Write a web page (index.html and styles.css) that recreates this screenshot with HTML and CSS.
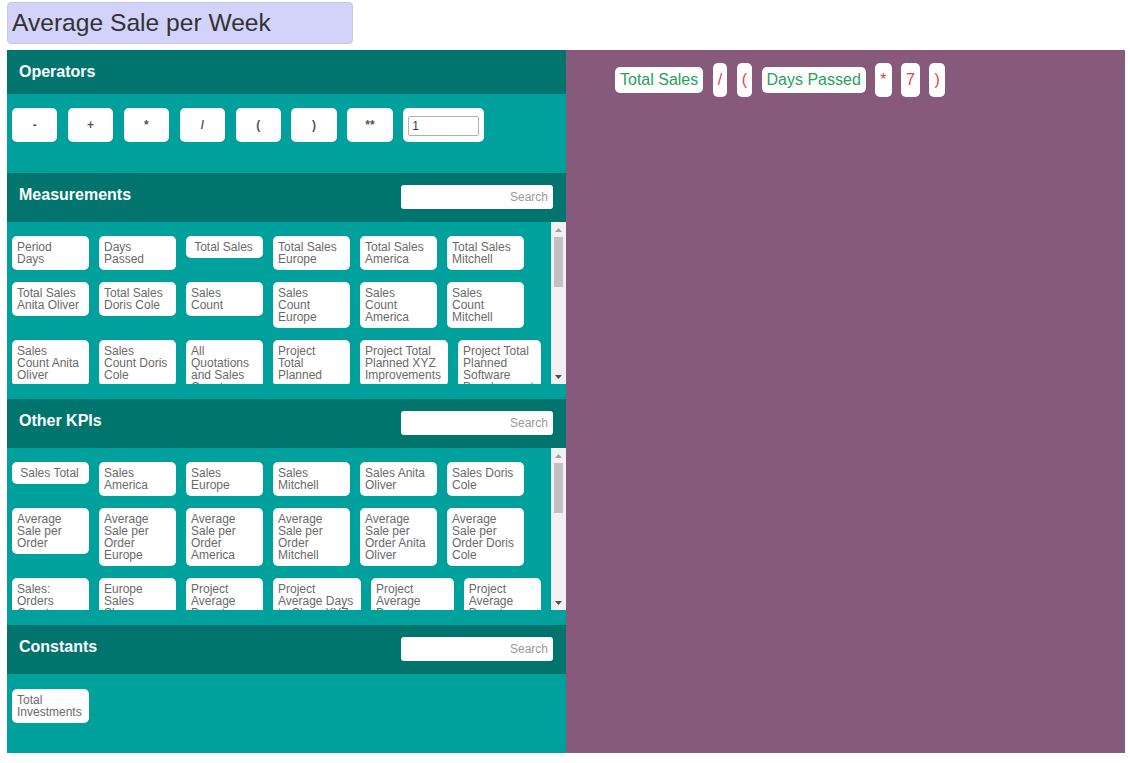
FILE: index.html
```html
<!DOCTYPE html>
<html>
<head>
<meta charset="utf-8">
<title>Average Sale per Week</title>
<link rel="stylesheet" href="styles.css">
</head>
<body>
<input class="title" type="text" value="Average Sale per Week">
<div class="editor">
  <div class="left">
    <section class="sec">
      <div class="hdr"><h3>Operators</h3></div>
      <div class="ops">
        <button class="op">-</button>
        <button class="op">+</button>
        <button class="op">*</button>
        <button class="op">/</button>
        <button class="op">(</button>
        <button class="op">)</button>
        <button class="op">**</button>
        <div class="op-num"><input type="text" value="1"></div>
      </div>
    </section>
    <section class="sec">
      <div class="hdr"><h3>Measurements</h3><input class="search" type="text" placeholder="Search"></div>
      <div class="scrollwrap">
        <div class="chips">
          <div class="chip"><span>Period Days</span></div>
          <div class="chip"><span>Days Passed</span></div>
          <div class="chip"><span>Total Sales</span></div>
          <div class="chip"><span>Total Sales Europe</span></div>
          <div class="chip"><span>Total Sales America</span></div>
          <div class="chip"><span>Total Sales Mitchell</span></div>
          <div class="chip"><span>Total Sales Anita Oliver</span></div>
          <div class="chip"><span>Total Sales Doris Cole</span></div>
          <div class="chip"><span>Sales Count</span></div>
          <div class="chip"><span>Sales Count Europe</span></div>
          <div class="chip"><span>Sales Count America</span></div>
          <div class="chip"><span>Sales Count Mitchell</span></div>
          <div class="chip"><span>Sales Count Anita Oliver</span></div>
          <div class="chip"><span>Sales Count Doris Cole</span></div>
          <div class="chip"><span>All Quotations and Sales Count</span></div>
          <div class="chip"><span>Project Total Planned</span></div>
          <div class="chip"><span>Project Total Planned XYZ Improvements</span></div>
          <div class="chip"><span>Project Total Planned Software Development</span></div>
          <div class="chip"><span>Project Total Invoiced</span></div>
          <div class="chip"><span>Project Total Invoiced XYZ</span></div>
          <div class="chip"><span>Project Total Invoiced Software</span></div>
          <div class="chip"><span>Project Margin</span></div>
          <div class="chip"><span>Project Margin XYZ</span></div>
          <div class="chip"><span>Project Margin Software</span></div>
        </div>
        <div class="vbar">
          <div class="vbtn"><svg width="15" height="15" viewBox="0 0 15 15"><polygon points="4,10 11,10 7.5,6" fill="#a3a3a3"/></svg></div>
          <div class="vtrack"><div class="vthumb"></div></div>
          <div class="vbtn"><svg width="15" height="15" viewBox="0 0 15 15"><polygon points="4,6 11,6 7.5,10" fill="#505050"/></svg></div>
        </div>
      </div>
    </section>
    <section class="sec">
      <div class="hdr"><h3>Other KPIs</h3><input class="search" type="text" placeholder="Search"></div>
      <div class="scrollwrap">
        <div class="chips">
          <div class="chip"><span>Sales Total</span></div>
          <div class="chip"><span>Sales America</span></div>
          <div class="chip"><span>Sales Europe</span></div>
          <div class="chip"><span>Sales Mitchell</span></div>
          <div class="chip"><span>Sales Anita Oliver</span></div>
          <div class="chip"><span>Sales Doris Cole</span></div>
          <div class="chip"><span>Average Sale per Order</span></div>
          <div class="chip"><span>Average Sale per Order Europe</span></div>
          <div class="chip"><span>Average Sale per Order America</span></div>
          <div class="chip"><span>Average Sale per Order Mitchell</span></div>
          <div class="chip"><span>Average Sale per Order Anita Oliver</span></div>
          <div class="chip"><span>Average Sale per Order Doris Cole</span></div>
          <div class="chip"><span>Sales: Orders Count</span></div>
          <div class="chip"><span>Europe Sales Shares</span></div>
          <div class="chip"><span>Project Average Days to Close</span></div>
          <div class="chip"><span>Project Average Days to Close XYZ Improvements</span></div>
          <div class="chip"><span>Project Average Days to Close Software Development</span></div>
          <div class="chip"><span>Project Average Days to Close Mitchell</span></div>
        </div>
        <div class="vbar">
          <div class="vbtn"><svg width="15" height="15" viewBox="0 0 15 15"><polygon points="4,10 11,10 7.5,6" fill="#a3a3a3"/></svg></div>
          <div class="vtrack"><div class="vthumb"></div></div>
          <div class="vbtn"><svg width="15" height="15" viewBox="0 0 15 15"><polygon points="4,6 11,6 7.5,10" fill="#505050"/></svg></div>
        </div>
      </div>
    </section>
    <section class="sec">
      <div class="hdr"><h3>Constants</h3><input class="search" type="text" placeholder="Search"></div>
      <div class="consts">
        <div class="chip"><span>Total Investments</span></div>
      </div>
    </section>
  </div>
  <div class="right">
    <div class="formula">
      <span class="tok tok-m">Total Sales</span>
      <span class="tok tok-o">/</span>
      <span class="tok tok-o">(</span>
      <span class="tok tok-m">Days Passed</span>
      <span class="tok tok-o">*</span>
      <span class="tok tok-o">7</span>
      <span class="tok tok-o">)</span>
    </div>
  </div>
</div>
</body>
</html>
```
FILE: styles.css
```css
* {
  box-sizing: border-box;
}

html {
  margin: 0;
  background: #ffffff;
}

body {
  margin: 2px 5px 0 7px;
  font-family: "Liberation Sans", Arial, sans-serif;
  background: #ffffff;
}

.title {
  display: block;
  width: 346px;
  height: 42px;
  margin: 0;
  padding: 0 4px;
  border: 1px solid #c9c9dc;
  border-radius: 4px;
  background: #d2d2fa;
  color: #333333;
  font-family: "Liberation Sans", Arial, sans-serif;
  font-size: 24.6px;
  outline: none;
}

.editor {
  display: flex;
  margin-top: 6px;
  height: 703px;
}

.left {
  width: 559px;
  flex: none;
  background: #00a09d;
  display: flex;
  flex-direction: column;
}

.right {
  width: 559px;
  flex: none;
  background: #875a7b;
  padding: 13px 0 0 49px;
}

.hdr {
  background: #00746d;
  padding: 12px 13px 12px 12px;
  display: flex;
  justify-content: space-between;
  align-items: flex-start;
}

.hdr h3 {
  margin: 0;
  font-size: 16px;
  line-height: 20px;
  font-weight: bold;
  color: #ffffff;
}

.search {
  width: 152px;
  height: 24px;
  margin: 0 0 1px 0;
  border: none;
  border-radius: 3px;
  background: #ffffff;
  text-align: right;
  padding: 0 5px;
  font-family: "Liberation Sans", Arial, sans-serif;
  font-size: 12px;
  color: #555555;
  outline: none;
}

.search::placeholder {
  color: #9a9a9a;
}

.ops {
  height: 79px;
  padding: 14px 5px 0 5px;
  display: flex;
  gap: 10.6px;
  align-items: flex-start;
}

.op {
  width: 45.3px;
  height: 34px;
  flex: none;
  border: none;
  border-radius: 5px;
  background: #ffffff;
  padding: 0;
  font-family: "Liberation Sans", Arial, sans-serif;
  font-size: 12px;
  font-weight: bold;
  color: #555555;
}

.op-num {
  width: 81px;
  height: 34px;
  flex: none;
  background: #ffffff;
  border-radius: 5px;
  padding: 8px 4px 6px 5px;
}

.op-num input {
  display: block;
  width: 71px;
  height: 20px;
  margin: 0;
  border: 1px solid #b0b0b0;
  border-radius: 2px;
  padding: 0 3px;
  font-family: "Liberation Sans", Arial, sans-serif;
  font-size: 12px;
  color: #2f3b55;
  background: #ffffff;
}

.scrollwrap {
  height: 162px;
  margin-bottom: 15px;
  display: flex;
}

.chips {
  flex: 1;
  min-width: 0;
  overflow: hidden;
  padding: 14px 5px 14px 5px;
  display: flex;
  flex-wrap: wrap;
  align-items: flex-start;
  align-content: flex-start;
  gap: 12px 10px;
}

.vbar {
  width: 15px;
  flex: none;
  background: #f1f1f1;
  display: flex;
  flex-direction: column;
}

.vbtn {
  height: 15px;
  flex: none;
}

.vbtn svg {
  display: block;
}

.vtrack {
  flex: 1;
  padding: 0 3px;
}

.vthumb {
  height: 50px;
  background: #c1c1c1;
}

.consts {
  height: 79px;
  padding: 15px 5px 0 5px;
  display: flex;
  flex-wrap: wrap;
  align-items: flex-start;
  align-content: flex-start;
  gap: 12px 10px;
}

.chip {
  flex: none;
  width: 77px;
  min-width: min-content;
  background: #ffffff;
  border-radius: 5px;
  padding: 5px 7px 5px 5px;
  display: flex;
  justify-content: center;
  font-size: 12px;
  line-height: 12px;
  color: #6a6a6a;
}

.chip span {
  display: block;
}

.formula {
  display: flex;
  align-items: center;
  gap: 9.5px;
}

.tok {
  background: #ffffff;
  border-radius: 5px;
  font-size: 16px;
  line-height: 18px;
  padding: 4px 5px;
}

.tok-m {
  color: #27a25b;
}

.tok-o {
  color: #e63f4a;
  padding: 8px 5px;
}
```
